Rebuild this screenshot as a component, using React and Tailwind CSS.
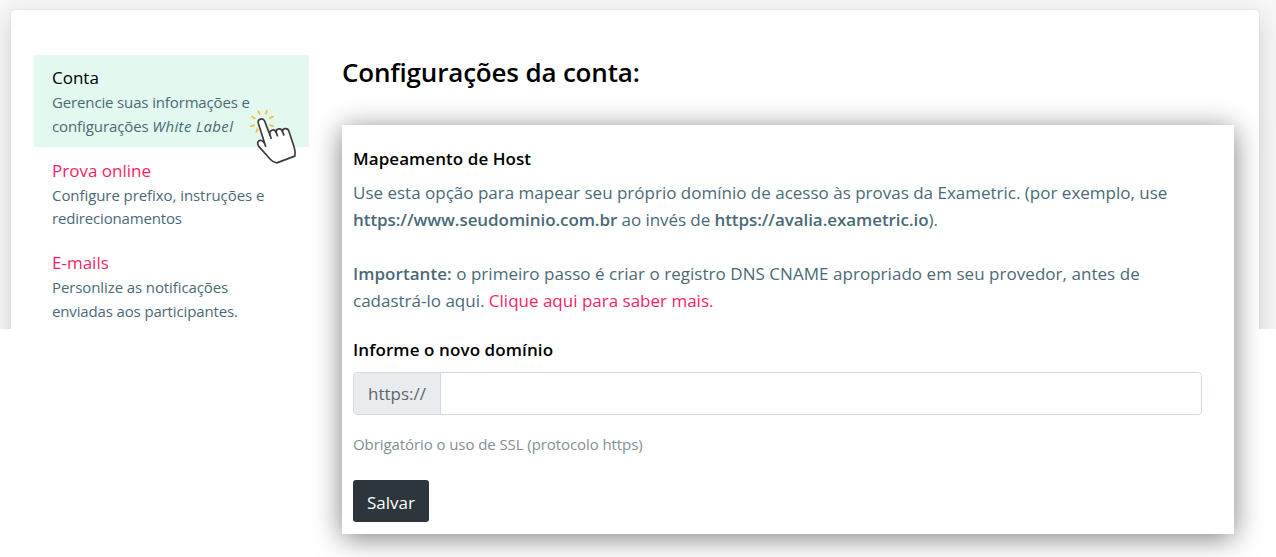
const MENU = [
  {
    title: 'Conta',
    active: true,
    lines: [
      { text: 'Gerencie suas informações e', tracking: 'tracking-[-0.14px]' },
      { text: 'configurações ', em: 'White Label', tracking: 'tracking-[-0.1px]' },
    ],
  },
  {
    title: 'Prova online',
    lines: [
      { text: 'Configure prefixo, instruções e', tracking: 'tracking-[-0.07px]' },
      { text: 'redirecionamentos', tracking: 'tracking-[-0.17px]' },
    ],
  },
  {
    title: 'E-mails',
    lines: [
      { text: 'Personlize as notificações', tracking: 'tracking-[-0.1px]' },
      { text: 'enviadas aos participantes.', tracking: 'tracking-[-0.14px]' },
    ],
  },
];

function ClickHand() {
  return (
    <svg
      className="absolute left-[214px] top-[53px] h-[57px] w-[50px]"
      viewBox="0 0 50 57"
      fill="none"
      strokeLinecap="round"
      strokeLinejoin="round"
    >
      <g stroke="#fbb92c" strokeWidth="1.7">
        <path d="M10.3 3.2l1.2 2.8M18.8 2.7l-.7 3M25 8.6l-3.1 1.7M25.1 18l-3.2-.8M4 8.6l2.6 1.7M2.8 18.2l3.2-1M9.6 21.2l-1.3 2.6" />
      </g>
      <path
        d="M17.6 38.2L10.4 15.6c-1.3-4.6 4.7-6.5 6.3-2.3l5.2 13.6c-1-5 4.6-6.6 6.2-2.8-.2-3.7 5.2-4.4 6.3-.8.3-3.5 5.5-3.8 6.6.1l5.1 15.5c1 3.2 1.3 6.4.7 9.2L28.8 54.9c-2.4-.3-4.8-1.6-6.6-3.6L10.8 38.4c-2.6-3.2-.5-6.6 2.6-5.9 1.8.4 2.9 2 4.2 5.7z"
        fill="#fff"
        stroke="#3c3c3c"
        strokeWidth="1.7"
      />
      <path d="M21.9 26.9l1.2 3.3M28.1 24.1l1.3 3.6M34.4 23.3l1.4 3.6" stroke="#3c3c3c" strokeWidth="1.7" />
    </svg>
  );
}

function MenuItem({ item }) {
  return (
    <li className={item.active ? 'relative bg-[#e3f8ee] px-[18px] py-[9px]' : 'px-[18px] pb-[9px] pt-[9.5px]'}>
      <a className={item.active ? 'block text-[17px] leading-[27px] text-black' : 'block text-[17px] leading-[27px] text-[#fb1e68]'}>
        {item.title}
      </a>
      <p className="text-[15px] leading-[23.6px] text-[#4b6a78]">
        {item.lines.map((line) => (
          <span key={line.text} className="block whitespace-nowrap">
            <span className={line.tracking}>{line.text}</span>
            {line.em ? <em className="tracking-[0.35px]">{line.em}</em> : null}
          </span>
        ))}
      </p>
      {item.active ? <ClickHand /> : null}
    </li>
  );
}

function HostPanel() {
  return (
    <section className="h-[409px] w-[892px] bg-white pl-[11px] pt-[20px] shadow-[0_4px_26px_rgba(0,0,0,0.5)]">
      <h2 className="text-[17px] font-semibold leading-[27px] tracking-[0.06px] text-black">Mapeamento de Host</h2>
      <div className="mt-[7px] whitespace-nowrap text-[17px] leading-[27px] text-[#4b6a78]">
        <p>
          <span className="block">
            Use esta opção para mapear seu próprio domínio de acesso às provas da Exametric. (por exemplo, use
          </span>
          <span className="block tracking-[-0.07px]">
            <b className="font-semibold">https://www.seudominio.com.br</b> ao invés de{' '}
            <b className="font-semibold">https://avalia.exametric.io</b>).
          </span>
        </p>
        <p className="mt-[27px]">
          <span className="block tracking-[0.04px]">
            <b className="font-semibold">Importante:</b> o primeiro passo é criar o registro DNS CNAME apropriado em seu provedor, antes de
          </span>
          <span className="block">
            cadastrá-lo aqui. <a className="text-[#fb1e68]">Clique aqui para saber mais.</a>
          </span>
        </p>
      </div>
      <label className="mt-[22px] block text-[17px] font-semibold leading-[27px] tracking-[0.1px] text-black">
        Informe o novo domínio
      </label>
      <div className="mt-[9px] flex h-[43px] w-[849px] rounded border border-[#d2d9e0]">
        <span className="flex w-[87px] items-center rounded-l-[3px] border-r border-[#d2d9e0] bg-[#e9ecef] pl-[14px] pt-px text-[17px] text-[#5d666d]">
          https://
        </span>
        <input className="min-w-0 flex-1 rounded-r bg-white px-3 outline-none" />
      </div>
      <small className="mt-[17px] block text-[15px] leading-6 tracking-[-0.08px] text-[#848e95]">
        Obrigatório o uso de SSL (protocolo https)
      </small>
      <button type="button" className="mt-6 h-[42px] w-[76px] rounded-[3px] bg-[#2e363d] pt-[3px] text-[17px] text-white">
        Salvar
      </button>
    </section>
  );
}

export default function App() {
  return (
    <div className="grid h-[557px] w-[1276px] overflow-hidden bg-white font-['Open_Sans','Noto_Sans',sans-serif]">
      <div className="col-start-1 row-start-1 h-[329px] overflow-hidden bg-[#f7f7f7] pl-[11px] pt-[10px]">
        <div className="h-[400px] w-[1248px] rounded bg-white shadow-[0_8px_26px_rgba(0,0,0,0.16),0_0_2px_rgba(0,0,0,0.12)]" />
      </div>
      <div className="col-start-1 row-start-1 flex items-start gap-[33px] pl-[34px] pt-[55px]">
        <ul className="w-[275px] shrink-0">
          {MENU.map((item) => (
            <MenuItem key={item.title} item={item} />
          ))}
        </ul>
        <main>
          <h1 className="mb-[36px] text-[26px] font-semibold leading-[34px] tracking-[-0.18px] text-black">
            Configurações da conta:
          </h1>
          <HostPanel />
        </main>
      </div>
    </div>
  );
}
